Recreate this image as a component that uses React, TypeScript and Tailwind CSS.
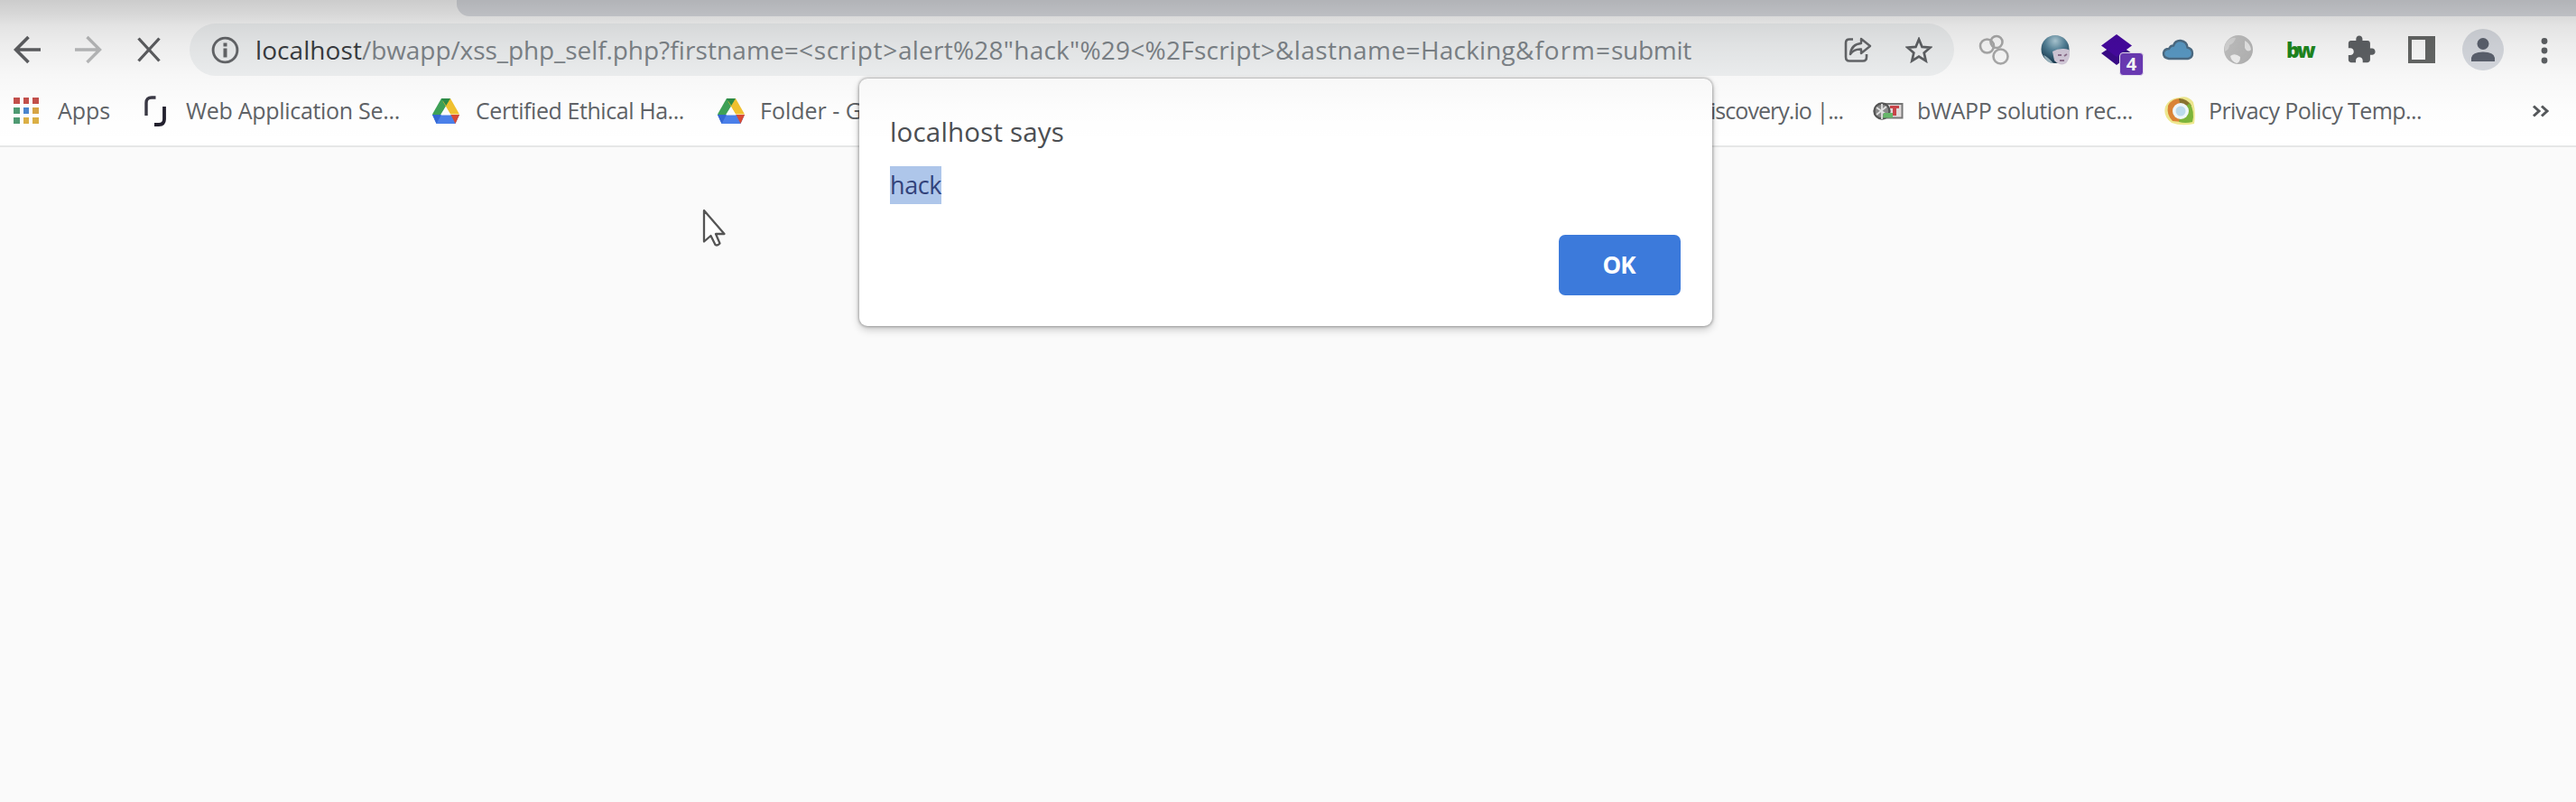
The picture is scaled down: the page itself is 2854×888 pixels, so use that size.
import React, { useLayoutEffect, useRef, useState } from "react";

type Box = { className?: string; children?: React.ReactNode };

function Svg({ w, h, children, className = "" }: { w: number; h: number } & Box) {
  return (
    <svg width={w} height={h} viewBox={`0 0 ${w} ${h}`} fill="none" className={`shrink-0 ${className}`}>
      {children}
    </svg>
  );
}

/* Spreads a label's letters so that the label fills the given width. */
function Fit({ width, text, className = "" }: { width: number; text: string; className?: string }) {
  const ref = useRef<HTMLSpanElement>(null);
  const [spacing, setSpacing] = useState(0);
  useLayoutEffect(() => {
    if (ref.current) {
      const natural = ref.current.getBoundingClientRect().width - spacing * text.length;
      setSpacing((width - natural) / text.length);
    }
  }, [width, text]);
  return (
    <span ref={ref} className={`inline-block shrink-0 whitespace-pre ${className}`} style={{ letterSpacing: `${spacing}px` }}>
      {text}
    </span>
  );
}

function AppsIcon() {
  const colors = ["#c5504b", "#c5504b", "#c5504b", "#4f9b73", "#4b86cf", "#d8a545", "#4f9b73", "#dcb045", "#dcb045"];
  return (
    <div className="grid shrink-0 grid-cols-3 gap-[4px]">
      {colors.map((c, i) => (
        <span key={i} className="size-[6.7px]" style={{ background: c }} />
      ))}
    </div>
  );
}

function BracketIcon() {
  return (
    <Svg w={24} h={34}>
      <path d="M2 22V8Q2 2 8 2H12.500" stroke="#3a3945" strokeWidth="3.400" />
      <path d="M22 12V26Q22 32 16 32H11" stroke="#22202e" strokeWidth="3.800" />
    </Svg>
  );
}

function DriveIcon() {
  return (
    <Svg w={30} h={28}>
      <path d="M10 0H20L15 8.500L5.500 24L0 17.500Z" fill="#3fa257" />
      <path d="M20 0L30 17.500H20L11.500 3Z" fill="#f2c230" />
      <path d="M10 0H20L15.200 8Z" fill="#2d8c48" />
      <path d="M0 18H30L25.500 28H4.500Z" fill="#4a80ea" />
      <path d="M0 18H10L4.500 28Z" fill="#3568d4" />
      <path d="M20.500 18H30L25.500 28Z" fill="#d94a34" />
      <path d="M15 9.500L20.500 18.500H9.500Z" fill="#fdfdfd" />
    </Svg>
  );
}

function BeeIcon() {
  return (
    <Svg w={34} h={22}>
      <rect x="12" y="3" width="20.500" height="15.500" fill="#e2dcdc" stroke="#777" strokeWidth="2" />
      <circle cx="10" cy="11" r="8.500" fill="#8b8b8b" stroke="#555" strokeWidth="2.400" />
      <path d="M4 7L15 15M4 15L15 6M10 3V20" stroke="#e4e4e4" strokeWidth="1.800" />
      <path d="M12 13H22V18.500H11Z" fill="#67b76a" />
      <path d="M19 5H29V8H26V16H22V8H19Z" fill="#c9454a" />
    </Svg>
  );
}

function SwirlIcon() {
  return (
    <Svg w={36} h={34}>
      <path d="M17 2Q27 -1 33 7Q36 18 34 31Q20 34 9 30Q-1 23 2 12Q6 3 17 2Z" fill="#efe98f" />
      <path d="M19 3Q9 3 5 11Q3 21 10 28L20 29V16Z" fill="#dc8536" />
      <path d="M17 3Q26 3 31 11L20 18Z" fill="#8a7430" />
      <path d="M29 8Q35 18 32 29Q24 31 17 29L20 16Z" fill="#7db53a" />
      <circle cx="19" cy="17" r="9" fill="#f1f8fb" />
      <circle cx="19" cy="17" r="5.500" fill="#bcdcee" />
    </Svg>
  );
}

function Slot({ children }: Box) {
  return <div className="relative flex h-[58px] w-[67.7px] shrink-0 items-center justify-center">{children}</div>;
}

function Toolbar() {
  return (
    <div className="flex h-[74px] shrink-0 items-center bg-white">
      <div className="flex w-[210px] shrink-0 items-center pl-[15px]">
        <Svg w={30} h={32}>
          <path d="M30 16H3M16.500 2L2.500 16L16.500 30" stroke="#5f6063" strokeWidth="3.600" />
        </Svg>
        <Svg w={30} h={32} className="ml-[38px]">
          <path d="M0 16H27M13.500 2L27.500 16L13.500 30" stroke="#bcbdbe" strokeWidth="3.400" />
        </Svg>
        <Svg w={26} h={28} className="ml-[39px]">
          <path d="M1.500 1.500L24.500 26.500M24.500 1.500L1.500 26.500" stroke="#5f6063" strokeWidth="3.300" />
        </Svg>
      </div>
      <div className="flex h-[58px] w-[1955px] shrink-0 items-center rounded-full bg-[#f1f3f4] pl-[24px] pr-[24px]">
        <Svg w={31} h={31}>
          <circle cx="15.500" cy="15.500" r="13.400" stroke="#66686b" strokeWidth="2.900" />
          <rect x="13.500" y="7.500" width="4" height="4" fill="#66686b" />
          <rect x="13.500" y="13.500" width="4" height="10" fill="#66686b" />
        </Svg>
        <div className="ml-[18px] flex flex-1 text-[28px] text-[#80868b]">
          <Fit width={118} text="localhost" className="text-[#3a3d41]" />
          <Fit width={329} text="/bwapp/xss_php_self.php" />
          <Fit width={155} text="?firstname=" />
          <Fit width={110} text="<script>" />
          <Fit width={418} text={'alert%28"hack"%29<%2Fscript>'} />
          <Fit width={161} text="&lastname=" />
          <Fit width={105} text="Hacking" />
          <Fit width={106} text="&form=" />
          <Fit width={89} text="submit" />
        </div>
        <Svg w={31} h={29}>
          <path d="M10 2.500H6Q2 2.500 2 6.500V22Q2 26.500 6 26.500H21Q25 26.500 25 22V19" stroke="#66686b" strokeWidth="2.600" />
          <path d="M19 2L29 10L19 18V13.500Q11 13 7 19Q8 8 19 7Z" stroke="#66686b" strokeWidth="2.400" strokeLinejoin="round" />
        </Svg>
        <Svg w={30} h={29} className="ml-[37px]">
          <path d="M15 2.500L18.500 10.900L27.500 11.700L20.700 17.600L22.700 26.400L15 21.700L7.300 26.400L9.300 17.600L2.500 11.700L11.500 10.900Z" stroke="#5f6265" strokeWidth="2.700" />
        </Svg>
      </div>
      <div className="ml-[10.600px] flex shrink-0 items-center">
        <Slot>
          <Svg w={34} h={34}>
            <circle cx="9.500" cy="13" r="7.500" stroke="#adadad" strokeWidth="2.600" />
            <circle cx="20" cy="8.500" r="6.500" stroke="#adadad" strokeWidth="2.600" />
            <circle cx="24.500" cy="24.500" r="8" stroke="#adadad" strokeWidth="2.600" />
          </Svg>
        </Slot>
        <Slot>
          <Svg w={34} h={34}>
            <defs>
              <radialGradient id="orb" cx="0.500" cy="0.200" r="0.800">
                <stop offset="0" stopColor="#b4d2de" />
                <stop offset="0.450" stopColor="#55859c" />
                <stop offset="1" stopColor="#16384e" />
              </radialGradient>
            </defs>
            <circle cx="17" cy="16.500" r="15.500" fill="url(#orb)" />
            <path d="M4 23Q9 25 15 32Q7 32 4 23Z" fill="#9db7c2" />
            <path d="M14 19Q22 14 32 17Q35 25 29 32Q23 36 16 29Z" fill="#d8cfdf" />
            <path d="M20 23H24M27 24L30 22M22 29H27" stroke="#8f718f" strokeWidth="1.800" />
          </Svg>
        </Slot>
        <Slot>
          <Svg w={34} h={34}>
            <path d="M17 10L34 21L17 34L0 21Z" fill="#3b0a8c" />
            <path d="M17 0L34 12.500L17 25L0 12.500Z" fill="#4709a3" />
          </Svg>
          <span className="absolute left-[37px] top-[32px] flex h-[26px] w-[27px] items-center justify-center rounded-[4px] border border-[#eee8f6] bg-[#6d3bb8] text-[20px] font-bold leading-none text-white">
            4
          </span>
        </Slot>
        <Slot>
          <Svg w={36} h={24}>
            <path d="M8 22Q1.500 21 2 15.500Q3 11 8 11Q10 7 13 7.500Q15 1.500 21 2Q28 3 28.500 9.500Q34 11 34 16Q34 21 29 22Z" fill="#5b9cc8" stroke="#4f6f88" strokeWidth="2.400" />
          </Svg>
        </Slot>
        <Slot>
          <Svg w={34} h={34}>
            <defs>
              <linearGradient id="globe" x1="0" y1="0" x2="1" y2="1">
                <stop offset="0" stopColor="#cccccc" />
                <stop offset="1" stopColor="#b4b4b4" />
              </linearGradient>
            </defs>
            <circle cx="17" cy="17" r="16" fill="url(#globe)" />
            <path d="M4 8Q9 3 14 4Q13 9 7 12Q7 17 2 19Q1 12 4 8Z" fill="#dadada" />
            <path d="M8 24Q13 20 19 25Q19 31 15 32Q9 30 8 24Z" fill="#f5f5f5" />
            <path d="M24 7Q30 10 31 17Q27 21 24 15Z" fill="#ececec" />
          </Svg>
        </Slot>
        <Slot>
          <Fit width={30} text="bw" className="text-[23px] font-extrabold leading-none text-[#1f8a1f]" />
        </Slot>
        <Slot>
          <svg width="34" height="34" viewBox="0 0 24 24" fill="#5f6265" className="shrink-0">
            <path d="M20.500 11H19V7c0-1.100-.9-2-2-2h-4V3.500C13 2.120 11.880 1 10.500 1S8 2.120 8 3.500V5H4c-1.100 0-1.990.9-1.990 2v3.800H3.500c1.490 0 2.700 1.210 2.700 2.700s-1.210 2.700-2.700 2.700H2V20c0 1.100.9 2 2 2h3.800v-1.500c0-1.490 1.210-2.700 2.700-2.700 1.490 0 2.700 1.210 2.700 2.700V22H17c1.100 0 2-.9 2-2v-4h1.500c1.380 0 2.500-1.120 2.500-2.500S21.880 11 20.500 11z" />
          </svg>
        </Slot>
        <Slot>
          <Svg w={30} h={30}>
            <path fillRule="evenodd" d="M0 0H30V30H0ZM4 4V26H19V4Z" fill="#666867" />
          </Svg>
        </Slot>
        <Slot>
          <div className="flex size-[46px] items-center justify-center rounded-full bg-[#dadde3]">
            <Svg w={26} h={26}>
              <circle cx="13" cy="6.500" r="6.500" fill="#5d6370" />
              <path d="M0 26V22Q1 15.500 13 15.500T26 22V26Z" fill="#5d6370" />
            </Svg>
          </div>
        </Slot>
        <Slot>
          <Svg w={8} h={30} className="mt-[2px]">
            <circle cx="4" cy="4.500" r="3.400" fill="#5f6265" />
            <circle cx="4" cy="15" r="3.400" fill="#5f6265" />
            <circle cx="4" cy="26" r="3.400" fill="#5f6265" />
          </Svg>
        </Slot>
      </div>
    </div>
  );
}

function BookmarkBar() {
  return (
    <div className="flex h-[71px] shrink-0 items-center whitespace-nowrap border-b-2 border-[#e6e7e7] bg-white pb-[8px] text-[25px] text-[#606367]">
      <div className="flex w-[160px] shrink-0 items-center pl-[15px]">
        <AppsIcon />
        <Fit width={58} text="Apps" className="ml-[21px]" />
      </div>
      <div className="flex w-[319px] shrink-0 items-center">
        <BracketIcon />
        <Fit width={237} text="Web Application Se..." className="ml-[22px]" />
      </div>
      <div className="flex w-[316px] shrink-0 items-center">
        <DriveIcon />
        <Fit width={231} text="Certified Ethical Ha..." className="ml-[18px]" />
      </div>
      <div className="flex w-[1100px] shrink-0 items-center">
        <DriveIcon />
        <Fit width={113} text="Folder - G" className="ml-[17px]" />
      </div>
      <div className="flex w-[180px] shrink-0">
        <Fit width={147} text="iscovery.io |..." />
      </div>
      <div className="flex w-[322px] shrink-0 items-center">
        <BeeIcon />
        <Fit width={239} text="bWAPP solution rec..." className="ml-[15px]" />
      </div>
      <div className="flex flex-1 items-center">
        <SwirlIcon />
        <Fit width={236} text="Privacy Policy Temp..." className="ml-[14px]" />
      </div>
      <Svg w={20} h={14} className="mr-[29px]">
        <path d="M2 1.500L8 7L2 12.500M11 1.500L17 7L11 12.500" stroke="#55585b" strokeWidth="3" />
      </Svg>
    </div>
  );
}

function AlertDialog() {
  return (
    <div className="absolute left-[952px] top-[87px] flex h-[274px] w-[945px] flex-col rounded-[9px] bg-white pl-[34px] pr-[35px] shadow-[0_0_3px_1px_rgba(0,0,0,0.28),0_4px_10px_rgba(0,0,0,0.2)]">
      <div className="mt-[39px] h-[40px] text-[29.500px] leading-[40px] text-[#4b4e52]">
        <Fit width={193} text="localhost says" />
      </div>
      <div className="mt-[18px] h-[42px] w-[57px] whitespace-nowrap bg-[#aec6ea] text-[27px] leading-[42px] text-[#32427a]">
        <Fit width={57} text="hack" />
      </div>
      <button className="mt-[34px] flex h-[67px] w-[135px] items-center justify-center self-end rounded-[7px] bg-[#3c7adb] pb-[2px] pr-[2px] text-[26px] font-bold leading-none text-white">
        <Fit width={36} text="OK" />
      </button>
    </div>
  );
}

export default function App() {
  return (
    <div className="relative flex h-[888px] w-[2854px] flex-col overflow-hidden bg-[#fafafa] font-['Open_Sans','Noto_Sans',sans-serif]">
      <div className="flex h-[18px] shrink-0 bg-white">
        <div className="w-[506px] shrink-0" />
        <div className="flex-1 rounded-bl-[14px] bg-[#dee0e5]" />
      </div>
      <Toolbar />
      <BookmarkBar />
      <svg width="28" height="44" viewBox="0 0 28 44" className="absolute left-[778px] top-[231px]" fill="none">
        <path d="M2 2V36.500L9.500 30L14.500 40Q17 41.500 19.500 38.500L15 28H24.500Z" fill="#fff" stroke="#555" strokeWidth="2.300" strokeLinejoin="round" />
      </svg>
      <AlertDialog />
      <div className="pointer-events-none absolute inset-x-0 top-0 h-[160px] bg-[linear-gradient(to_bottom,rgba(0,0,0,0.2)_0px,rgba(0,0,0,0.15)_18px,rgba(0,0,0,0.11)_28px,rgba(0,0,0,0.07)_50px,rgba(0,0,0,0.03)_84px,rgba(0,0,0,0.008)_125px,rgba(0,0,0,0)_160px)]" />
    </div>
  );
}
